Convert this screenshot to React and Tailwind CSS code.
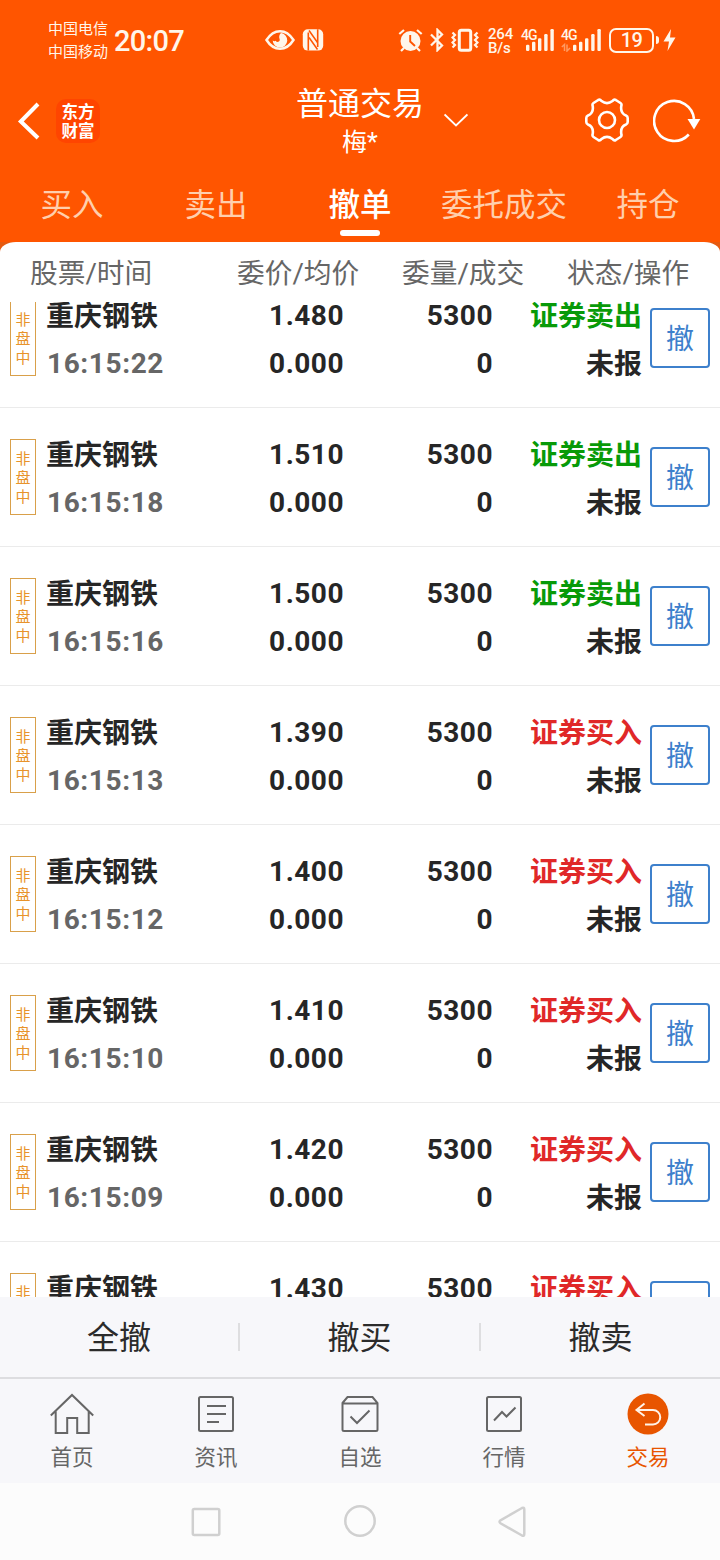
import React from 'react';

const orders = [
  { time: '16:15:22', price: '1.480', side: 'sell' },
  { time: '16:15:18', price: '1.510', side: 'sell' },
  { time: '16:15:16', price: '1.500', side: 'sell' },
  { time: '16:15:13', price: '1.390', side: 'buy' },
  { time: '16:15:12', price: '1.400', side: 'buy' },
  { time: '16:15:10', price: '1.410', side: 'buy' },
  { time: '16:15:09', price: '1.420', side: 'buy' },
  { time: '16:15:08', price: '1.430', side: 'buy' },
];

const tabs = ['买入', '卖出', '撤单', '委托成交', '持仓'];

const EyeIcon = () => (
  <svg width="30" height="24" viewBox="0 0 30 24" fill="none">
    <path d="M1.5 12C5 6.500 9.500 3.200 15 3.200S25 6.500 28.500 12C25 17.500 20.500 20.800 15 20.800S5 17.500 1.500 12z" stroke="#fff6ea" strokeWidth="2.500" />
    <path d="M16 5a7.300 7.300 0 1 1-8.300 7.500c1.200.8 2.300.8 3 .2.800 1.800 3.500 1.500 4-.5.300-1.500-.8-2-.5-3.700.2-1.500.8-2.500 1.800-3.500z" fill="#fff6ea" />
  </svg>
);

const NfcIcon = () => (
  <svg width="22" height="24" viewBox="0 0 22 24" fill="none">
    <rect x=".8" y="1.200" width="20.400" height="21.400" rx="5" fill="#fff6ea" />
    <path d="M6.300 22.600V4.500M15.700 1.200V19" stroke="#ff5500" strokeWidth="1.600" />
    <path d="M7 2.500l8.500 12M7 9.500l8.500 12" stroke="#ff5500" strokeWidth="1.500" />
  </svg>
);

const AlarmIcon = () => (
  <svg width="25" height="24" viewBox="0 0 25 24" fill="none" stroke="#fff6ea" strokeWidth="2.200">
    <circle cx="12.500" cy="13" r="10" fill="#fff6ea" stroke="none" />
    <path d="M1.300 6l4.700-4M23.700 6L19 2M6 20L3 23M19 20l3 3" />
    <path d="M12.200 7v6.500l4.800 4.500" stroke="#ff5500" strokeWidth="1.900" />
  </svg>
);

const BluetoothIcon = () => (
  <svg width="14" height="24" viewBox="0 0 14 24" fill="none" stroke="#fff6ea" strokeWidth="2.300">
    <path d="M1 6.500l11 11-4.500 4.500V2L12 6.500l-11 11" />
  </svg>
);

const VibrateIcon = () => (
  <svg width="28" height="24" viewBox="0 0 28 24" fill="none" stroke="#fff6ea">
    <rect x="8.300" y="2.300" width="11.400" height="20" rx="2" strokeWidth="3" />
    <path d="M1.500 4.500L4 7l-2.500 2.500L4 12l-2.500 2.500L4 17l-2.500 2.500M26.500 4.500L24 7l2.500 2.500L24 12l2.500 2.500L24 17l2.500 2.500" strokeWidth="2.200" />
  </svg>
);

const Bars = () => (
  <svg className="shrink-0" width="28" height="24" viewBox="0 0 28 24" fill="#fff6ea">
    <rect x="0" y="16.700" width="3.400" height="6.300" rx="1.200" />
    <rect x="6" y="13.700" width="3.400" height="9.300" rx="1.200" />
    <rect x="12" y="10.300" width="3.400" height="12.700" rx="1.200" />
    <rect x="18.200" y="6" width="3.400" height="17" rx="1.200" />
    <rect x="24.400" y="1" width="3.400" height="22" rx="1.200" />
  </svg>
);

const StatusBar = () => (
  <div className="flex h-20 items-center pl-12 font-['Roboto','Noto_Sans_CJK_SC',sans-serif] text-[#fff6ea]">
    <div className="w-[66px] pt-px text-[15px] leading-[23px]">
      <p>中国电信</p>
      <p>中国移动</p>
    </div>
    <span className="w-[151px] pt-px text-[29px] leading-10 font-medium tracking-[-0.7px]">20:07</span>
    <div className="flex w-[133px] gap-[7px]">
      <EyeIcon />
      <NfcIcon />
    </div>
    <AlarmIcon />
    <div className="ml-[7px]"><BluetoothIcon /></div>
    <div className="ml-[7px]"><VibrateIcon /></div>
    <div className="ml-[9px] w-[33px] pt-px text-[15px] leading-[14px] font-medium tracking-[-0.2px]">
      <p>264</p>
      <p>B/s</p>
    </div>
    <div className="relative h-6 w-8 pl-[5px]">
      <Bars />
      <span className="absolute top-0 left-0 text-[14px] leading-[14px] font-medium tracking-[-1px]">4G</span>
    </div>
    {/* The second SIM has its bars further right, next to the data arrows */}
    <div className="relative ml-2 h-6 w-10 pl-3">
      <Bars />
      <span className="absolute top-0 left-0 text-[14px] leading-[14px] font-medium tracking-[-1px]">4G</span>
      <svg className="absolute bottom-0 left-0" width="11" height="9" viewBox="0 0 11 9" fill="none" stroke="#ff9a62" strokeWidth="1.500">
        <path d="M.8 4L3.500 1.500V8M6 1.500V8l3-3" />
      </svg>
    </div>
    <div className="ml-2 flex h-[25px] w-[45px] items-center justify-center rounded-[7px] border-2 border-[#fff6ea] text-[20px] leading-5 font-medium tracking-[-0.5px]">
      19
    </div>
    <div className="ml-[2px] h-2 w-[3px] rounded-r bg-[#fff6ea]" />
    <svg className="ml-[4px]" width="13" height="24" viewBox="0 0 13 24" fill="#fff6ea">
      <path d="M8 1L.5 13.500H6L4.500 23 12.500 9.500H7z" />
    </svg>
  </div>
);

const Header = () => (
  <div className="flex h-[82px] text-white">
    <div className="flex w-[244px] items-center pl-[17px]">
      <svg width="24" height="40" viewBox="0 0 24 40" fill="none" stroke="white" strokeWidth="4">
        <path d="M21 3L3.800 20.500 21 37" />
      </svg>
      <div className="ml-[15px] h-11 w-11 rounded-[10px] bg-[#ff4500] pt-[3px] text-center font-['Noto_Sans_CJK_SC',sans-serif] text-[16.5px] leading-[19px] font-bold">
        <p>东方</p>
        <p>财富</p>
      </div>
    </div>
    <div className="flex w-[232px] items-start justify-center">
      <div className="pt-px text-center">
        <h1 className="h-[46px] text-[32px] leading-[46px]">普通交易</h1>
        <p className="h-8 text-[25px] leading-8">梅*</p>
      </div>
    </div>
    <div className="flex flex-1 items-center">
      <svg className="relative -top-px -ml-8 shrink-0" width="24" height="14" viewBox="0 0 24 14" fill="none" stroke="white" strokeWidth="1.800">
        <path d="M.6 1.500L12 12.500 23.400 1.500" />
      </svg>
      <svg className="relative -top-px ml-[117px] shrink-0" width="44" height="44" viewBox="0 0 44 44" fill="none" stroke="white" strokeWidth="2.600">
        <path d="M13.200 2Q15 1 16.500 3Q22 7.200 27.500 3Q29 1 30.800 2L35.500 5Q37 6 36.300 8Q35.200 15.300 41 17.500Q42.700 18.200 42.700 20V24Q42.700 25.800 41 26.500Q35.200 28.700 36.300 36Q37 38 35.500 39L30.800 42Q29 43 27.500 41Q22 36.800 16.500 41Q15 43 13.200 42L8.500 39Q7 38 7.700 36Q8.800 28.700 3 26.500Q1.300 25.800 1.300 24V20Q1.300 18.200 3 17.500Q8.800 15.300 7.700 8Q7 6 8.500 5Z" />
        <circle cx="22" cy="22" r="8" />
      </svg>
      <svg className="ml-6 shrink-0" width="48" height="44" viewBox="0 0 48 44" fill="none">
        <path d="M35.800 35.500A20 20 0 1 1 41 20" stroke="white" strokeWidth="2.600" />
        <path d="M34.500 20h12.800L41 30.500z" fill="white" />
      </svg>
    </div>
  </div>
);

const Tabs = () => (
  <div className="grid h-20 grid-cols-5 text-center text-[31.500px] leading-[46px]">
    {tabs.map((tab) => (
      <div key={tab} className={tab === '撤单' ? 'pt-[21px] font-medium text-white' : 'pt-[21px] text-[#ffcfad]'}>
        <p className="h-[47px] whitespace-nowrap">{tab}</p>
        {tab === '撤单' && <div className="mx-auto h-1.5 w-10 rounded-full bg-white" />}
      </div>
    ))}
  </div>
);

const OrderRow = ({ order }) => (
  <div className="flex h-[139px] shrink-0 border-b border-[#ebebeb] pl-2.5 text-[28px] leading-[48px] font-bold text-[#262626]">
    <div className="mt-[31px] flex h-[76px] w-[26px] flex-col border border-[#d9a04a] pt-[10px] text-center text-[15px] leading-[19px] font-normal text-[#e8932a]">
      <span>非</span>
      <span>盘</span>
      <span>中</span>
    </div>
    <div className="ml-[10px] w-[151px] pt-[24px]">
      <p className="h-[47px]">重庆钢铁</p>
      <p className="pl-px tracking-[0.6px] text-[#666]">{order.time}</p>
    </div>
    <div className="w-[147px] pt-[23px] text-right tracking-[0.5px]">
      <p>{order.price}</p>
      <p>0.000</p>
    </div>
    <div className="w-[149px] pt-[23px] text-right tracking-[0.5px]">
      <p>5300</p>
      <p>0</p>
    </div>
    <div className="w-[149px] pt-[24px] text-right">
      <p className={order.side === 'sell' ? 'text-[#089a08]' : 'text-[#e02828]'}>
        {order.side === 'sell' ? '证券卖出' : '证券买入'}
      </p>
      <p>未报</p>
    </div>
    <button className="mt-[39px] ml-2 h-[60px] w-[60px] rounded border-2 border-[#3d80cc] pt-[3px] text-[28px] leading-[53px] font-normal text-[#3d80cc]">
      撤
    </button>
  </div>
);

const NavItem = ({ label, active, children }) => (
  <div className={active ? 'text-[#e85500]' : 'text-[#666]'}>
    <svg className="mx-auto mt-[13px]" width="44" height="44" viewBox="0 0 44 44" fill="none" stroke="currentColor" strokeWidth="2">
      {children}
    </svg>
    <p className="mt-[6px] text-[21.500px] leading-8">{label}</p>
  </div>
);

const App = () => {
  return (
    <div className="flex h-[1560px] w-[720px] flex-col overflow-hidden bg-[#ff5500] font-['Roboto','Noto_Sans_CJK_SC',sans-serif]">
      <StatusBar />
      <Header />
      <Tabs />
      {/* Order list */}
      <div className="bg-[#e65a10]">
        <div className="flex h-[60px] bg-white pl-[30px] text-[27.700px] leading-[64px] text-[#666] [border-radius:16px_16px_0_0/10px_10px_0_0]">
          <span className="w-[207px]">股票/时间</span>
          <span className="w-[165px]">委价/均价</span>
          <span className="w-[165px]">委量/成交</span>
          <span>状态/操作</span>
        </div>
      </div>
      <div className="h-[995px] overflow-hidden bg-white">
        <div className="-mt-[33px] flex flex-col">
          {orders.map((order) => (
            <OrderRow key={order.time} order={order} />
          ))}
        </div>
      </div>
      {/* Batch cancel actions */}
      <div className="flex h-20 items-center bg-[#f7f7fa] text-center text-[32px] leading-[46px] text-[#2b2b2b]">
        <span className="w-[238px] pt-[2px]">全撤</span>
        <div className="h-7 w-0.5 bg-[#dedee0]" />
        <span className="w-[239px] pt-[2px]">撤买</span>
        <div className="h-7 w-0.5 bg-[#dedee0]" />
        <span className="flex-1 pt-[2px]">撤卖</span>
      </div>
      {/* App navigation */}
      <div className="grid h-[106px] grid-cols-5 border-t-2 border-[#dddde0] bg-[#f7f7fa] text-center">
        <NavItem label="首页">
          <path d="M.8 23.500L22 3l21.200 20.500M5.700 19.500V41h11.500V26h10v15h11.500V19.500" />
        </NavItem>
        <NavItem label="资讯">
          <rect x="5" y="5" width="34" height="34" rx="1.500" />
          <path d="M13 14h19M13 22h19M13 30h12" />
        </NavItem>
        <NavItem label="自选">
          <path d="M4.500 11L9.500 5h25l5 6v26.500a1.500 1.500 0 0 1-1.500 1.500H6a1.500 1.500 0 0 1-1.500-1.500zM4.500 11.500h35" />
          <path d="M12.500 24.500l6.500 6.500 12.500-12.500" />
        </NavItem>
        <NavItem label="行情">
          <rect x="5" y="5" width="34" height="34" rx="1.500" />
          <path d="M12 28.500l8-8.500 4.500 4.500 9-9" />
        </NavItem>
        <NavItem label="交易" active>
          <circle cx="22" cy="22" r="20.500" fill="currentColor" stroke="none" />
          <path d="M18.500 11.500L10.500 18l8 6M11 18h16a7.200 7.200 0 0 1 0 14.500h-8" stroke="#fff3e8" />
        </NavItem>
      </div>
      {/* System navigation */}
      <div className="flex h-[77px] bg-[#fcfcfc] pl-[190px]">
        <svg className="mt-[22px]" width="340" height="34" viewBox="0 0 340 34" fill="none" stroke="#d0d0d0" strokeWidth="2.500">
          <rect x="2.800" y="4" width="26.500" height="26" rx="1.500" />
          <circle cx="170" cy="16" r="14.700" />
          <path d="M310.500 15.300L332 3q2.300-1 2.300 1.500v24.500q0 2.500-2.300 1.500L310.500 18.300q-2-1.500 0-3z" />
        </svg>
      </div>
    </div>
  );
};

export default App;
